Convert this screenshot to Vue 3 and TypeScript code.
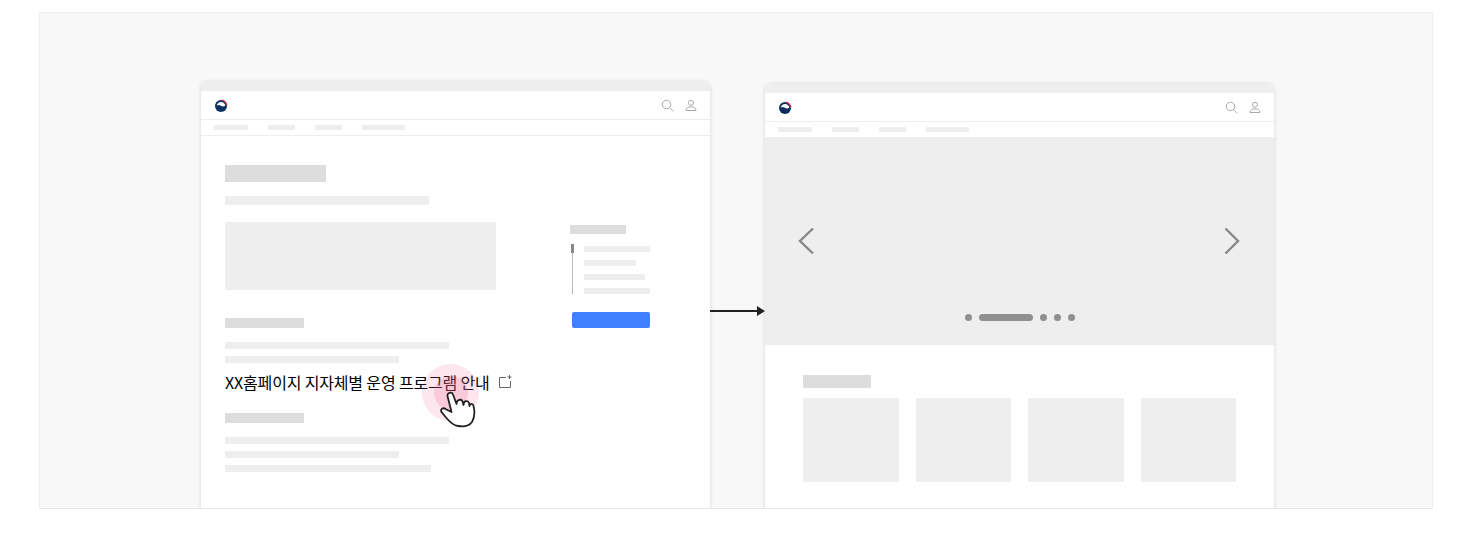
<template>
  <div class="page">
    <div class="stage">
      <div class="browser">
        <div class="titlebar"></div>
        <header class="head">
          <svg class="logo" width="14" height="14" viewBox="0 0 14 14">
            <circle cx="7" cy="7" r="6" fill="#0b2f5f" />
            <path d="M7.500 1.100A5.900 5.900 0 0 1 12.900 6.600" fill="none" stroke="#e2324f" stroke-width="1.300" />
            <path d="M2.800 6.800C3 4.500 5 3 7 3c2.200 0 4 1.400 4.300 3.400C9.600 8 8 7.400 7 6.800 5.500 5.900 4 5.600 2.800 6.800z" fill="#fff" />
          </svg>
          <div class="tools">
            <svg width="14" height="14" viewBox="0 0 14 14" fill="none" stroke="#aaa" stroke-width="1">
              <circle cx="5.500" cy="5.500" r="4.200" />
              <path d="M8.500 8.500l3.800 3.800" />
            </svg>
            <svg width="14" height="14" viewBox="0 0 14 14" fill="none" stroke="#aaa" stroke-width="1">
              <circle cx="7" cy="3.800" r="2.500" />
              <path d="M2 11.500h10c0-2.400-2-3.700-5-3.700s-5 1.300-5 3.700z" />
            </svg>
          </div>
        </header>
        <nav class="nav">
          <span v-for="w in navWidths" :key="w.id" class="nav-item" :style="{ width: w.width + 'px' }"></span>
        </nav>
        <div class="doc">
          <div class="doc-main">
            <div class="ph-title"></div>
            <div class="ph-sub"></div>
            <div class="ph-box"></div>
            <div class="ph-head"></div>
            <div class="ph-line w224"></div>
            <div class="ph-line w174"></div>
            <div class="link-row">
              <span class="link-text">XX홈페이지 지자체별 운영 프로그램 안내</span>
              <svg class="ext" width="14" height="14" viewBox="0 0 14 14" fill="none" stroke="#666" stroke-width="1">
                <path d="M8 2.500H1.500v10h11V6" />
                <path d="M11.500 0v4M9.500 2h4" />
              </svg>
              <span class="ripple"><span class="ripple-in"></span></span>
              <svg class="hand" width="36" height="38" viewBox="0 0 36 38">
                <path
                  d="M11.500 22 7.500 6C7 2.500 12 1.500 13 4.500L16.500 14C16.500 9.500 21.500 8.500 22.500 11.500L23.500 15C23.500 10.500 28 10 29 13L29.500 16C30 13 33 13.500 33.500 16 35 22 35 27 32 32 29 36 23 37 18 36 12 35 9 31 6 27.500L1.500 22C0 19.500 3 17 5.500 19Z"
                  fill="#fff"
                  stroke="#222"
                  stroke-width="1.800"
                  stroke-linejoin="round"
                />
              </svg>
            </div>
            <div class="ph-head second"></div>
            <div class="ph-line w224"></div>
            <div class="ph-line w174"></div>
            <div class="ph-line w206"></div>
          </div>
          <aside class="doc-side">
            <div class="side-head"></div>
            <div class="toc">
              <span class="toc-mark"></span>
              <div class="toc-lines">
                <span class="toc-line" style="width: 66px"></span>
                <span class="toc-line" style="width: 52px"></span>
                <span class="toc-line" style="width: 61px"></span>
                <span class="toc-line" style="width: 66px"></span>
              </div>
            </div>
            <div class="side-btn"></div>
          </aside>
        </div>
      </div>

      <div class="arrow"></div>

      <div class="browser lower">
        <div class="titlebar"></div>
        <header class="head">
          <svg class="logo" width="14" height="14" viewBox="0 0 14 14">
            <circle cx="7" cy="7" r="6" fill="#0b2f5f" />
            <path d="M7.500 1.100A5.900 5.900 0 0 1 12.900 6.600" fill="none" stroke="#e2324f" stroke-width="1.300" />
            <path d="M2.800 6.800C3 4.500 5 3 7 3c2.200 0 4 1.400 4.300 3.400C9.600 8 8 7.400 7 6.800 5.500 5.900 4 5.600 2.800 6.800z" fill="#fff" />
          </svg>
          <div class="tools">
            <svg width="14" height="14" viewBox="0 0 14 14" fill="none" stroke="#aaa" stroke-width="1">
              <circle cx="5.500" cy="5.500" r="4.200" />
              <path d="M8.500 8.500l3.800 3.800" />
            </svg>
            <svg width="14" height="14" viewBox="0 0 14 14" fill="none" stroke="#aaa" stroke-width="1">
              <circle cx="7" cy="3.800" r="2.500" />
              <path d="M2 11.500h10c0-2.400-2-3.700-5-3.700s-5 1.300-5 3.700z" />
            </svg>
          </div>
        </header>
        <nav class="nav">
          <span v-for="w in navWidths" :key="w.id" class="nav-item" :style="{ width: w.width + 'px' }"></span>
        </nav>
        <section class="hero">
          <div class="hero-row">
            <svg width="16" height="28" viewBox="0 0 16 28" fill="none" stroke="#888" stroke-width="2.400">
              <path d="M15 1.500 2 14l13 12.500" />
            </svg>
            <svg width="16" height="28" viewBox="0 0 16 28" fill="none" stroke="#888" stroke-width="2.400">
              <path d="M1.500 1.500 14 14 1.500 26.500" />
            </svg>
          </div>
          <div class="dots">
            <span class="dot"></span>
            <span class="dot long"></span>
            <span class="dot"></span>
            <span class="dot"></span>
            <span class="dot"></span>
          </div>
        </section>
        <section class="cards-wrap">
          <div class="cards-title"></div>
          <div class="cards">
            <div v-for="n in 4" :key="n" class="card"></div>
          </div>
        </section>
      </div>
    </div>
  </div>
</template>

<script setup lang="ts">
const navWidths = [
  { id: 'a', width: 34 },
  { id: 'b', width: 27 },
  { id: 'c', width: 27 },
  { id: 'd', width: 43 }
];
</script>

<style>
html,
body {
  margin: 0;
  background: #fff;
}
</style>

<style scoped>
.page {
  width: 1474px;
  height: 552px;
  padding: 12px 41px 0 39px;
  box-sizing: border-box;
  font-family: "Noto Sans CJK KR", "Noto Sans", sans-serif;
}

.stage {
  position: relative;
  display: flex;
  align-items: flex-start;
  gap: 55px;
  height: 497px;
  padding: 69px 0 0 161px;
  box-sizing: border-box;
  background: #f8f8f8;
  border-top: 1px solid #eeeeee;
  border-left: 1px solid #eeeeee;
  border-right: 1px solid #eeeeee;
  border-bottom: 1px solid #e6e6e6;
  overflow: hidden;
}

.browser {
  flex: none;
  width: 509px;
  height: 430px;
  background: #fff;
  border-radius: 6px 6px 0 0;
  box-shadow: 0 0 4px rgba(0, 0, 0, 0.14);
}

.browser.lower {
  margin-top: 2px;
}

.titlebar {
  height: 9px;
  background: #eeeeee;
  border-radius: 6px 6px 0 0;
}

.head {
  display: flex;
  align-items: center;
  justify-content: space-between;
  height: 29px;
  padding: 2px 12px 0 13px;
  box-sizing: border-box;
  border-bottom: 1px solid #eeeeee;
}

.logo {
  display: block;
}

.tools {
  display: flex;
  gap: 9px;
}

.tools svg {
  display: block;
}

.nav {
  display: flex;
  align-items: center;
  gap: 20px;
  height: 16px;
  padding: 0 13px;
  box-sizing: border-box;
  border-bottom: 1px solid #eeeeee;
}

.nav-item {
  height: 5px;
  background: #eeeeee;
}

.doc {
  display: flex;
  padding: 29px 0 0 24px;
}

.doc-main {
  position: relative;
  width: 345px;
}

.ph-title {
  width: 101px;
  height: 17px;
  background: #dddddd;
}

.ph-sub {
  width: 204px;
  height: 9px;
  margin-top: 14px;
  background: #eeeeee;
}

.ph-box {
  width: 271px;
  height: 68px;
  margin-top: 17px;
  background: #eeeeee;
}

.ph-head {
  width: 79px;
  height: 10px;
  margin-top: 28px;
  background: #dddddd;
}

.ph-head + .ph-line {
  margin-top: 14px;
}

.ph-head.second {
  margin-top: 19px;
}

.ph-line {
  height: 7px;
  margin-top: 7px;
  background: #eeeeee;
}

.w224 {
  width: 224px;
}

.w174 {
  width: 174px;
}

.w206 {
  width: 206px;
}

.link-row {
  position: relative;
  display: flex;
  align-items: center;
  height: 24px;
  margin-top: 7px;
}

.link-text {
  font-size: 16px;
  font-weight: 400;
  line-height: 24px;
  color: #000;
  letter-spacing: -0.16px;
  white-space: nowrap;
}

.ext {
  margin-left: 8px;
}

.ripple {
  position: absolute;
  left: 197px;
  top: -6px;
  display: flex;
  align-items: center;
  justify-content: center;
  width: 57px;
  height: 57px;
  border-radius: 50%;
  background: rgba(240, 100, 150, 0.16);
}

.ripple-in {
  width: 34px;
  height: 34px;
  border-radius: 50%;
  background: rgba(240, 100, 150, 0.22);
}

.hand {
  position: absolute;
  left: 215px;
  top: 20px;
}

.doc-side {
  padding-top: 60px;
}

.side-head {
  width: 56px;
  height: 9px;
  background: #dddddd;
}

.toc {
  position: relative;
  display: flex;
  margin-top: 10px;
  margin-left: 2px;
  padding-left: 12px;
  height: 50px;
}

.toc::before {
  content: "";
  position: absolute;
  left: 0;
  top: 0;
  bottom: 0;
  width: 1px;
  background: #bbbbbb;
}

.toc-mark {
  position: absolute;
  left: -1px;
  top: 0;
  width: 3px;
  height: 9px;
  background: #888888;
}

.toc-lines {
  display: flex;
  flex-direction: column;
  gap: 8px;
  padding-top: 2px;
}

.toc-line {
  display: block;
  height: 6px;
  background: #eeeeee;
}

.side-btn {
  width: 78px;
  height: 16px;
  margin: 18px 0 0 2px;
  border-radius: 2px;
  background: #4080ff;
}

.arrow {
  position: absolute;
  left: 670px;
  top: 297px;
  width: 50px;
  height: 2px;
  background: #222;
}

.arrow::after {
  content: "";
  position: absolute;
  right: -5px;
  top: -4.500px;
  border-left: 8px solid #222;
  border-top: 5.500px solid transparent;
  border-bottom: 5.500px solid transparent;
}

.hero {
  position: relative;
  height: 207px;
  background: #eeeeee;
}

.hero-row {
  display: flex;
  justify-content: space-between;
  padding: 89px 34px 0 33px;
}

.dots {
  position: absolute;
  left: 0;
  right: 0;
  bottom: 24px;
  display: flex;
  justify-content: center;
  align-items: center;
  gap: 7px;
}

.dot {
  width: 7px;
  height: 7px;
  border-radius: 4px;
  background: #8f8f8f;
}

.dot.long {
  width: 54px;
}

.cards-wrap {
  padding: 30px 38px 0;
}

.cards-title {
  width: 68px;
  height: 13px;
  background: #dddddd;
}

.cards {
  display: grid;
  grid-template-columns: repeat(4, 95.500px);
  justify-content: space-between;
  margin-top: 10px;
}

.card {
  height: 84px;
  background: #eeeeee;
}
</style>
